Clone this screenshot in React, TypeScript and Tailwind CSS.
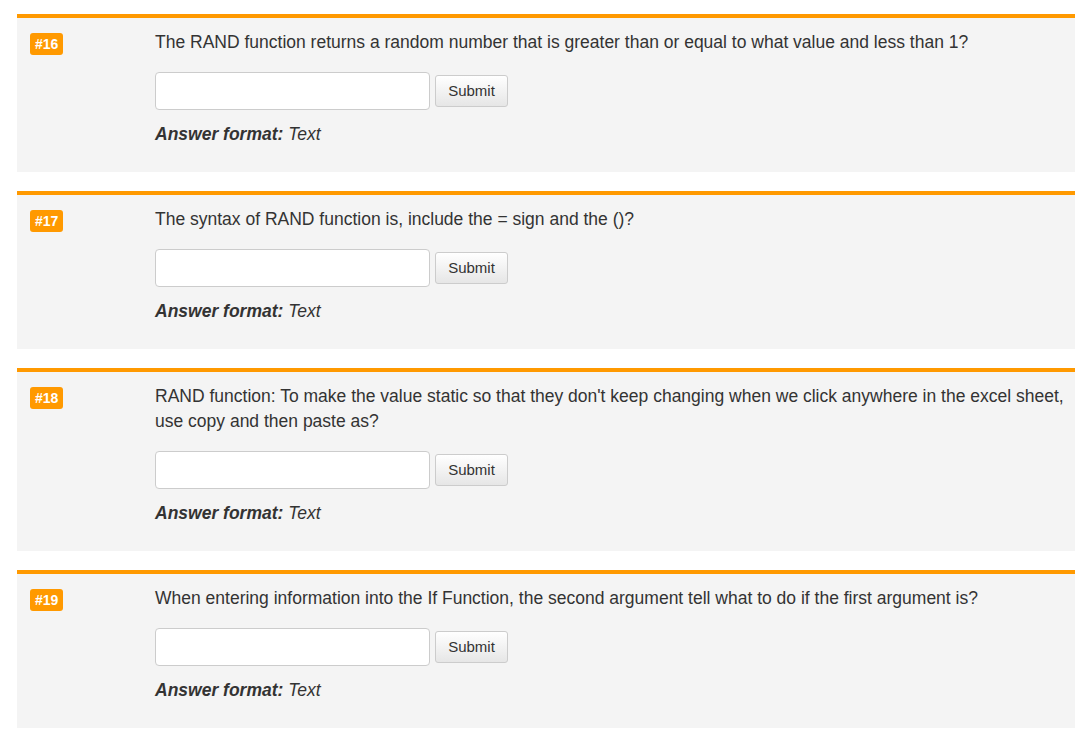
import React from "react";

const questions = [
  { n: 16, q: "The RAND function returns a random number that is greater than or equal to what value and less than 1?" },
  { n: 17, q: "The syntax of RAND function is, include the = sign and the ()?" },
  { n: 18, q: "RAND function: To make the value static so that they don't keep changing when we click anywhere in the excel sheet, use copy and then paste as?" },
  { n: 19, q: "When entering information into the If Function, the second argument tell what to do if the first argument is?" },
];

function Card({ n, q }: { n: number; q: string }) {
  return (
    <div className="border-t-4 border-[#ff9900] bg-[#f4f4f4] flex pt-[12px] pb-[25px] mb-[19px]">
      <div className="w-[138px] shrink-0 pl-[13px] pt-[2px]">
        <span className="inline-block bg-[#ff9900] text-white font-bold text-[14px] leading-[22px] px-[5px] rounded-[3px]">
          #{n}
        </span>
      </div>
      <div className="flex-1 pr-[8px] text-[#333]">
        <p className="text-[17.5px] leading-[25px]">{q}</p>
        <div className="flex items-center mt-[17px] gap-[5px]">
          <input
            type="text"
            className="w-[275px] h-[38px] bg-white border border-[#ccc] rounded-[4px] outline-none px-3"
          />
          <button className="w-[73px] h-[32px] border border-[#ccc] rounded-[3px] bg-gradient-to-b from-white to-[#e6e6e6] text-[15px] text-[#333]">
            Submit
          </button>
        </div>
        <p className="mt-[12px] text-[17.5px] leading-[25px] italic">
          <b>Answer format:</b> Text
        </p>
      </div>
    </div>
  );
}

export default function App() {
  return (
    <div className="min-h-[732px] bg-white pt-[14px] pl-[17px]" style={{ fontFamily: '"Liberation Sans", Arial, sans-serif' }}>
      {questions.map((x) => (
        <Card key={x.n} {...x} />
      ))}
    </div>
  );
}
